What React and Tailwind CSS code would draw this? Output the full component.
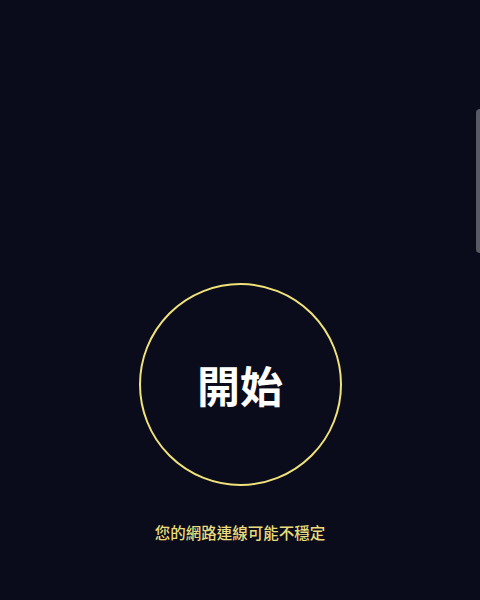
export default function App() {
  return (
    <div
      className="relative w-[480px] h-[600px] bg-[#0b0c1b] overflow-hidden flex flex-col items-center pt-[283px]"
      style={{ fontFamily: '"Noto Sans CJK TC", "Noto Sans", sans-serif' }}
    >
      <button className="w-[203px] h-[203px] rounded-full border-2 border-[#f0e27a] flex items-center justify-center bg-transparent">
        <span className="text-white text-[43px] font-bold leading-none tracking-[0px]">開始</span>
      </button>
      <p className="mt-[34px] text-[15.5px] font-medium leading-6 text-[#e9dc7c]">您的網路連線可能不穩定</p>
      <div className="absolute right-0 top-[109px] w-[4px] h-[144px] rounded-l-[4px] bg-[#5a5a66]" />
    </div>
  );
}
